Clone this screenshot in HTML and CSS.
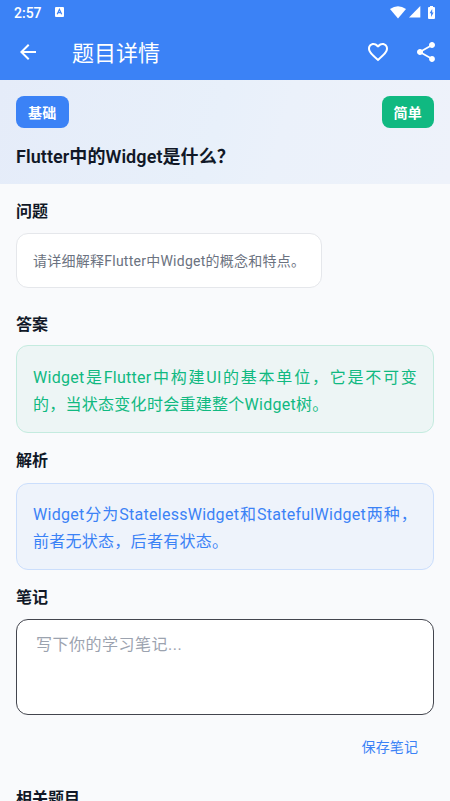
FILE: index.html
```html
<!DOCTYPE html>
<html lang="zh-CN">
<head>
<meta charset="utf-8">
<meta name="viewport" content="width=device-width, initial-scale=1">
<title>题目详情</title>
<link rel="stylesheet" href="styles.css">
</head>
<body>
<div class="screen">
  <header class="top">
    <div class="status">
      <span class="time">2:57</span>
      <svg class="app-badge" width="9" height="10" viewBox="0 0 9 10"><rect width="9" height="10" rx="1" fill="#fff"/><path d="M2.2 7.2 4.4 2.4 6.7 7.2M3 5.7h2.9" fill="none" stroke="#3b82f6" stroke-width="1.2"/></svg>
      <div class="indicators">
        <svg width="16" height="13" viewBox="0 0 16 13"><path d="M0 3Q8-2.4 16 3L8 12.6z" fill="#fff"/></svg>
        <svg width="12" height="12" viewBox="0 0 12 12"><path d="M11.3 0v11.4H0z" fill="#fff"/></svg>
        <svg class="battery" width="7" height="13" viewBox="0 0 7 13"><path d="M2 0h3v1h1q1 0 1 1v10q0 1-1 1H1q-1 0-1-1V2q0-1 1-1h1z" fill="#fff"/><path d="M4.2 3 1.6 7.2h1.5V11l2.5-4.6H4.2z" fill="#3b82f6"/></svg>
      </div>
    </div>
    <div class="appbar">
      <svg class="icon" viewBox="0 0 24 24"><path d="M20 11H7.83l5.59-5.59L12 4l-8 8 8 8 1.41-1.41L7.83 13H20v-2z"/></svg>
      <h1>题目详情</h1>
      <div class="actions">
        <svg class="icon" viewBox="0 0 24 24"><path d="M16.5 3c-1.74 0-3.41.81-4.5 2.09C10.91 3.81 9.24 3 7.5 3 4.42 3 2 5.42 2 8.5c0 3.78 3.4 6.86 8.55 11.54L12 21.35l1.45-1.32C18.6 15.36 22 12.28 22 8.5 22 5.42 19.58 3 16.5 3zm-4.4 15.55-.1.1-.1-.1C7.14 14.24 4 11.39 4 8.5 4 6.5 5.5 5 7.5 5c1.54 0 3.04.99 3.57 2.36h1.87C13.46 5.99 14.96 5 16.5 5c2 0 3.5 1.5 3.5 3.5 0 2.89-3.14 5.74-7.9 10.05z"/></svg>
        <svg class="icon" viewBox="0 0 24 24"><path d="M18 16.08c-.76 0-1.44.3-1.96.77L8.91 12.7c.05-.23.09-.46.09-.7s-.04-.47-.09-.7l7.05-4.11c.54.5 1.25.81 2.04.81 1.66 0 3-1.34 3-3s-1.34-3-3-3-3 1.34-3 3c0 .24.04.47.09.7L8.04 9.81C7.5 9.31 6.79 9 6 9c-1.66 0-3 1.34-3 3s1.34 3 3 3c.79 0 1.5-.31 2.04-.81l7.12 4.16c-.05.21-.08.43-.08.65 0 1.61 1.31 2.92 2.92 2.92s2.92-1.31 2.92-2.92-1.31-2.92-2.92-2.92z"/></svg>
      </div>
    </div>
  </header>
  <section class="summary">
    <div class="tags"><span class="tag">基础</span><span class="tag easy">简单</span></div>
    <h2>Flutter中的Widget是什么？</h2>
  </section>
  <main>
    <h3>问题</h3>
    <div class="card question">请详细解释Flutter中Widget的概念和特点。</div>
    <h3>答案</h3>
    <div class="card answer">Widget是Flutter中构建UI的基本单位，它是不可变的，当状态变化时会重建整个Widget树。</div>
    <h3>解析</h3>
    <div class="card analysis">Widget分为StatelessWidget和StatefulWidget两种，前者无状态，后者有状态。</div>
    <h3>笔记</h3>
    <textarea class="notes" placeholder="写下你的学习笔记..."></textarea>
    <div class="save-row"><button>保存笔记</button></div>
    <h3>相关题目</h3>
  </main>
</div>
</body>
</html>
```
FILE: styles.css
```css
* { box-sizing: border-box; }
body {
  margin: 0;
  background: #f9fafc;
  color: #111827;
  font-family: Roboto, "Noto Sans CJK SC", sans-serif;
  text-spacing-trim: space-all;
}
h1, h2, h3 { margin: 0; }
svg { display: block; }
.screen { height: 801px; overflow: hidden; }
.top { height: 80px; background: #3b82f6; color: #fff; }
.status { height: 24px; padding: 0 15px 0 14px; display: flex; align-items: center; }
.time { font-size: 14px; font-weight: 500; line-height: 24px; padding-top: 2px; }
.app-badge { margin-left: 13px; }
.indicators { margin-left: auto; display: flex; align-items: center; gap: 3px; }
.battery { margin-left: 4px; }
.appbar { height: 56px; padding: 0 12px 0 16px; display: flex; align-items: center; }
.icon { width: 24px; height: 24px; fill: #fff; }
.appbar h1 { margin-left: 32px; padding-top: 4px; font-size: 22px; font-weight: 400; line-height: 28px; }
.actions { margin-left: auto; display: flex; gap: 24px; }
.summary {
  height: 104px;
  padding: 16px;
  background: linear-gradient(105deg, #e5ecf9 0%, #e8f0fa 48%, #ebf1fa 62%, #eef2fa 100%);
}
.tags { display: flex; justify-content: space-between; }
.tag {
  height: 32px;
  padding: 0 12px;
  border-radius: 8px;
  background: #3b82f6;
  color: #fff;
  font-size: 14px;
  font-weight: 600;
  line-height: 34px;
  letter-spacing: .25px;
}
.easy { background: #10b981; }
.summary h2 { margin-top: 16px; font-size: 18px; font-weight: 600; line-height: 26px; letter-spacing: .07px; white-space: nowrap; }
main { padding: 16px; display: flex; flex-direction: column; }
h3 { font-size: 16px; font-weight: 600; line-height: 24px; }
.card { border: 1px solid; border-radius: 12px; padding: 16px; }
.question {
  align-self: flex-start;
  height: 55px;
  margin: 9px 0 25px;
  padding-top: 17px;
  border-color: #e5e7eb;
  background: #fff;
  color: #6b7280;
  font-size: 14px;
  line-height: 21px;
  letter-spacing: .25px;
  white-space: nowrap;
}
.answer, .analysis { padding-top: 17px; font-size: 16px; line-height: 27.2px; letter-spacing: .27px; text-align: justify; }
.answer { height: 88px; margin: 8px 0 16px; padding-top: 18px; color: #10b981; background: #edf5f5; border-color: #c4ebdf; }
.analysis { height: 87px; margin: 10px 0 16px; color: #3b82f6; background: #eef3fb; border-color: #cbdefc; }
.notes {
  height: 96px;
  margin: 9px 0 13px;
  padding: 11px 19px;
  border: 1px solid #43454e;
  border-radius: 12px;
  background: #fff;
  resize: none;
  outline: none;
  overflow: hidden;
  font-family: inherit;
  font-size: 16px;
  line-height: 27px;
  letter-spacing: .5px;
}
.notes::placeholder { color: #9ca3af; }
.save-row { display: flex; justify-content: flex-end; margin-bottom: 19px; }
.save-row button {
  height: 40px;
  padding: 0 16px;
  border: 0;
  background: none;
  color: #3b82f6;
  font-family: inherit;
  font-size: 14px;
  line-height: 18px;
  letter-spacing: .1px;
  transform: translateY(-1px);
}
```
